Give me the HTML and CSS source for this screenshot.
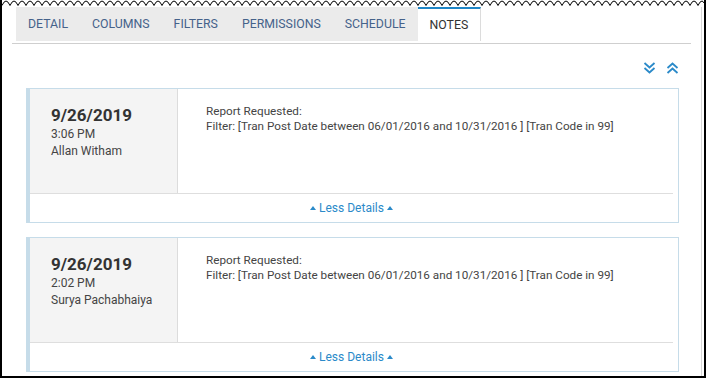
FILE: index.html
```html
<!DOCTYPE html>
<html lang="en">
<head>
  <meta charset="UTF-8">
  <title>Report Notes</title>
  <link rel="stylesheet" href="styles.css">
</head>
<body>
  <div class="frame">
    <svg class="tear" width="702" height="7" viewBox="0 0 702 7">
      <path d="M0 5.5 Q2 1 4 1 Q6 1 8 5.5 Q10 1 12 1 Q14 1 16 5.5 Q18 1 20 1 Q22 1 24 5.5 Q26 1 28 1 Q30 1 32 5.5 Q34 1 36 1 Q38 1 40 5.5 Q42 1 44 1 Q46 1 48 5.5 Q50 1 52 1 Q54 1 56 5.5 Q58 1 60 1 Q62 1 64 5.5 Q66 1 68 1 Q70 1 72 5.5 Q74 1 76 1 Q78 1 80 5.5 Q82 1 84 1 Q86 1 88 5.5 Q90 1 92 1 Q94 1 96 5.5 Q98 1 100 1 Q102 1 104 5.5 Q106 1 108 1 Q110 1 112 5.5 Q114 1 116 1 Q118 1 120 5.5 Q122 1 124 1 Q126 1 128 5.5 Q130 1 132 1 Q134 1 136 5.5 Q138 1 140 1 Q142 1 144 5.5 Q146 1 148 1 Q150 1 152 5.5 Q154 1 156 1 Q158 1 160 5.5 Q162 1 164 1 Q166 1 168 5.5 Q170 1 172 1 Q174 1 176 5.5 Q178 1 180 1 Q182 1 184 5.5 Q186 1 188 1 Q190 1 192 5.5 Q194 1 196 1 Q198 1 200 5.5 Q202 1 204 1 Q206 1 208 5.5 Q210 1 212 1 Q214 1 216 5.5 Q218 1 220 1 Q222 1 224 5.5 Q226 1 228 1 Q230 1 232 5.5 Q234 1 236 1 Q238 1 240 5.5 Q242 1 244 1 Q246 1 248 5.5 Q250 1 252 1 Q254 1 256 5.5 Q258 1 260 1 Q262 1 264 5.5 Q266 1 268 1 Q270 1 272 5.5 Q274 1 276 1 Q278 1 280 5.5 Q282 1 284 1 Q286 1 288 5.5 Q290 1 292 1 Q294 1 296 5.5 Q298 1 300 1 Q302 1 304 5.5 Q306 1 308 1 Q310 1 312 5.5 Q314 1 316 1 Q318 1 320 5.5 Q322 1 324 1 Q326 1 328 5.5 Q330 1 332 1 Q334 1 336 5.5 Q338 1 340 1 Q342 1 344 5.5 Q346 1 348 1 Q350 1 352 5.5 Q354 1 356 1 Q358 1 360 5.5 Q362 1 364 1 Q366 1 368 5.5 Q370 1 372 1 Q374 1 376 5.5 Q378 1 380 1 Q382 1 384 5.5 Q386 1 388 1 Q390 1 392 5.5 Q394 1 396 1 Q398 1 400 5.5 Q402 1 404 1 Q406 1 408 5.5 Q410 1 412 1 Q414 1 416 5.5 Q418 1 420 1 Q422 1 424 5.5 Q426 1 428 1 Q430 1 432 5.5 Q434 1 436 1 Q438 1 440 5.5 Q442 1 444 1 Q446 1 448 5.5 Q450 1 452 1 Q454 1 456 5.5 Q458 1 460 1 Q462 1 464 5.5 Q466 1 468 1 Q470 1 472 5.5 Q474 1 476 1 Q478 1 480 5.5 Q482 1 484 1 Q486 1 488 5.5 Q490 1 492 1 Q494 1 496 5.5 Q498 1 500 1 Q502 1 504 5.5 Q506 1 508 1 Q510 1 512 5.5 Q514 1 516 1 Q518 1 520 5.5 Q522 1 524 1 Q526 1 528 5.5 Q530 1 532 1 Q534 1 536 5.5 Q538 1 540 1 Q542 1 544 5.5 Q546 1 548 1 Q550 1 552 5.5 Q554 1 556 1 Q558 1 560 5.5 Q562 1 564 1 Q566 1 568 5.5 Q570 1 572 1 Q574 1 576 5.5 Q578 1 580 1 Q582 1 584 5.5 Q586 1 588 1 Q590 1 592 5.5 Q594 1 596 1 Q598 1 600 5.5 Q602 1 604 1 Q606 1 608 5.5 Q610 1 612 1 Q614 1 616 5.5 Q618 1 620 1 Q622 1 624 5.5 Q626 1 628 1 Q630 1 632 5.5 Q634 1 636 1 Q638 1 640 5.5 Q642 1 644 1 Q646 1 648 5.5 Q650 1 652 1 Q654 1 656 5.5 Q658 1 660 1 Q662 1 664 5.5 Q666 1 668 1 Q670 1 672 5.5 Q674 1 676 1 Q678 1 680 5.5 Q682 1 684 1 Q686 1 688 5.5 Q690 1 692 1 Q694 1 696 5.5 Q698 1 700 1 Q701 1 702 3" fill="none" stroke="#000" stroke-width="1"/>
    </svg>

    <div class="content">
      <div class="tabs">
        <div class="tab">Detail</div>
        <div class="tab">Columns</div>
        <div class="tab">Filters</div>
        <div class="tab">Permissions</div>
        <div class="tab">Schedule</div>
        <div class="tab active">Notes</div>
      </div>

      <div class="toolbar">
        <svg class="chev" width="13" height="12" viewBox="0 0 13 12">
          <path d="M1.5 1 L6.5 5.5 L11.5 1 M1.5 6 L6.5 10.5 L11.5 6" fill="none" stroke="#2b8ac9" stroke-width="1.8"/>
        </svg>
        <svg class="chev" width="13" height="12" viewBox="0 0 13 12">
          <path d="M1.5 6 L6.5 1.5 L11.5 6 M1.5 11 L6.5 6.5 L11.5 11" fill="none" stroke="#2b8ac9" stroke-width="1.8"/>
        </svg>
      </div>

      <div class="note">
        <div class="note-main">
          <div class="note-meta">
            <div class="note-date">9/26/2019</div>
            <div class="note-time">3:06 PM</div>
            <div class="note-user">Allan Witham</div>
          </div>
          <div class="note-body">
            <div>Report Requested:</div>
            <div>Filter: [Tran Post Date between 06/01/2016 and 10/31/2016 ] [Tran Code in 99]</div>
          </div>
        </div>
        <div class="note-foot">
          <span class="tri"></span> Less Details <span class="tri"></span>
        </div>
      </div>

      <div class="note">
        <div class="note-main">
          <div class="note-meta">
            <div class="note-date">9/26/2019</div>
            <div class="note-time">2:02 PM</div>
            <div class="note-user">Surya Pachabhaiya</div>
          </div>
          <div class="note-body">
            <div>Report Requested:</div>
            <div>Filter: [Tran Post Date between 06/01/2016 and 10/31/2016 ] [Tran Code in 99]</div>
          </div>
        </div>
        <div class="note-foot">
          <span class="tri"></span> Less Details <span class="tri"></span>
        </div>
      </div>
    </div>
  </div>
</body>
</html>
```

FILE: styles.css
```css
body {
  margin: 0;
  background: #fff;
  font-family: Roboto, "Liberation Sans", sans-serif;
  color: #444;
}

.frame {
  width: 706px;
  height: 378px;
  box-sizing: border-box;
  border-left: 2px solid #000;
  border-right: 2px solid #000;
  border-bottom: 2px solid #000;
  display: flex;
  flex-direction: column;
  overflow: hidden;
}

.tear {
  display: block;
  flex: none;
}

.content {
  flex: 1;
  margin-right: 2px;
  border-right: 1px solid #d6d6d6;
  padding: 0 10px;
}

/* tab strip */
.tabs {
  display: flex;
  padding-left: 4px;
  padding-bottom: 2px;
  border-bottom: 1px solid #cfcfcf;
}

.tab {
  height: 34px;
  line-height: 34px;
  padding: 0 12px;
  background: #ebebeb;
  color: #45628a;
  font-size: 12.3px;
  text-transform: uppercase;
}

.tab.active {
  background: #fff;
  color: #333;
  height: 32px;
  line-height: 32px;
  border-top: 2px solid #1f86c7;
  border-right: 1px solid #dcdcdc;
}

.toolbar {
  display: flex;
  justify-content: flex-end;
  gap: 10px;
  padding: 18px 12px 0 0;
  height: 26px;
}

.chev {
  display: block;
}

/* note cards */
.note {
  margin: 0 12px 14px 14px;
  border: 1px solid #c6dce9;
  border-left: 4px solid #c6dce9;
}

.note-main {
  display: flex;
  height: 104px;
  border-bottom: 1px solid #dedede;
  margin-right: 5px;
}

.note-meta {
  width: 148px;
  flex: none;
  background: #f4f4f4;
  border-right: 1px solid #dcdcdc;
  padding: 15px 0 0 21px;
  box-sizing: border-box;
}

.note-date {
  font-size: 17px;
  font-weight: bold;
  color: #333;
  line-height: 22px;
}

.note-time,
.note-user {
  font-size: 12px;
  line-height: 17px;
  color: #444;
}

.note-body {
  padding: 15px 0 0 28px;
  font-size: 11.7px;
  line-height: 15px;
  color: #444;
}

.note-foot {
  height: 28px;
  line-height: 28px;
  text-align: center;
  font-size: 12px;
  color: #2b8ac9;
  margin-right: 5px;
}

.tri {
  display: inline-block;
  width: 0;
  height: 0;
  border-left: 3.5px solid transparent;
  border-right: 3.5px solid transparent;
  border-bottom: 4px solid #2b8ac9;
  vertical-align: 2px;
}
```
